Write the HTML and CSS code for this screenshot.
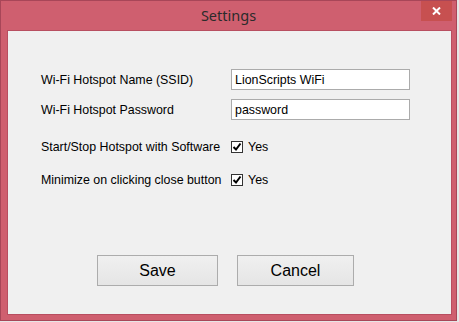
FILE: index.html
```html
<!DOCTYPE html>
<html lang="en">

<head>
    <meta charset="UTF-8">
    <title>Settings</title>
    <link rel="stylesheet" href="styles.css">
</head>

<body>
    <div class="window">
        <div class="titlebar">
            <span class="title">Settings</span>
            <button class="close-btn" title="Close">
                <svg width="9" height="8" viewBox="0 0 9 8">
                    <path d="M1 0.5 L8 7.5 M8 0.5 L1 7.5" stroke="#fff" stroke-width="2" fill="none" />
                </svg>
            </button>
        </div>

        <div class="client">
            <div class="form">
                <div class="row">
                    <label class="label">Wi-Fi Hotspot Name (SSID)</label>
                    <input class="textbox" type="text" value="LionScripts WiFi">
                </div>
                <div class="row">
                    <label class="label">Wi-Fi Hotspot Password</label>
                    <input class="textbox" type="text" value="password">
                </div>
                <div class="row check-row first-check">
                    <label class="label">Start/Stop Hotspot with Software</label>
                    <span class="check">
                        <span class="box">
                            <svg width="10" height="10" viewBox="0 0 10 10">
                                <path d="M1.5 5 L4 7.5 L8.5 1.5" stroke="#000" stroke-width="2" fill="none" />
                            </svg>
                        </span>
                        Yes
                    </span>
                </div>
                <div class="row check-row">
                    <label class="label">Minimize on clicking close button</label>
                    <span class="check">
                        <span class="box">
                            <svg width="10" height="10" viewBox="0 0 10 10">
                                <path d="M1.5 5 L4 7.5 L8.5 1.5" stroke="#000" stroke-width="2" fill="none" />
                            </svg>
                        </span>
                        Yes
                    </span>
                </div>
            </div>

            <div class="buttons">
                <button class="button save">Save</button>
                <button class="button cancel">Cancel</button>
            </div>
        </div>
    </div>
</body>

</html>
```

FILE: styles.css
```css
body {
    margin: 0;
    background: #e6e6e6;
    font-family: 'Liberation Sans', Arial, sans-serif;
    font-size: 12.4px;
    color: #000;
}

.window {
    width: 455px;
    height: 319px;
    background: #cf5f6f;
    border: 1px solid #a84658;
    display: flex;
    flex-direction: column;
}

.titlebar {
    height: 29px;
    display: flex;
    justify-content: center;
    align-items: center;
    position: relative;
}

.title {
    font-family: 'Noto Sans', sans-serif;
    font-size: 14.5px;
    color: #2b2b2b;
    margin-top: -1px;
}

.close-btn {
    position: absolute;
    top: 0;
    right: 4px;
    width: 31px;
    height: 20px;
    border: none;
    padding: 0;
    background: #c75050;
    display: flex;
    justify-content: center;
    align-items: center;
}

.client {
    flex: 1;
    margin: 0 4px 5px 6px;
    background: #f0f0f0;
    border: 1px solid #b84e60;
    display: flex;
    flex-direction: column;
}

.form {
    padding: 38px 0 0 33px;
    display: flex;
    flex-direction: column;
    gap: 9px;
}

.row {
    display: flex;
    align-items: center;
    height: 21px;
}

.label {
    width: 190px;
}

.textbox {
    width: 179px;
    height: 21px;
    box-sizing: border-box;
    border: 1px solid #ababab;
    background: #fff;
    padding: 0 3px;
    font-family: 'Liberation Sans', Arial, sans-serif;
    font-size: 12.4px;
    color: #000;
    outline: none;
}

.check-row {
    height: 20px;
}

.first-check {
    margin-top: 8px;
}

.check-row + .check-row {
    margin-top: 4px;
}

.check {
    display: flex;
    align-items: center;
    gap: 5px;
}

.box {
    width: 12px;
    height: 12px;
    box-sizing: border-box;
    border: 1px solid #333;
    background: #fff;
    display: flex;
    justify-content: center;
    align-items: center;
}

.buttons {
    margin-top: auto;
    padding: 0 0 28px 89px;
    display: flex;
    gap: 19px;
}

.button {
    height: 31px;
    box-sizing: border-box;
    border: 1px solid #acacac;
    background: linear-gradient(#f0f0f0, #e5e5e5);
    font-family: 'Liberation Sans', Arial, sans-serif;
    font-size: 16px;
    color: #000;
    padding: 0;
}

.save {
    width: 121px;
}

.cancel {
    width: 117px;
}
```
